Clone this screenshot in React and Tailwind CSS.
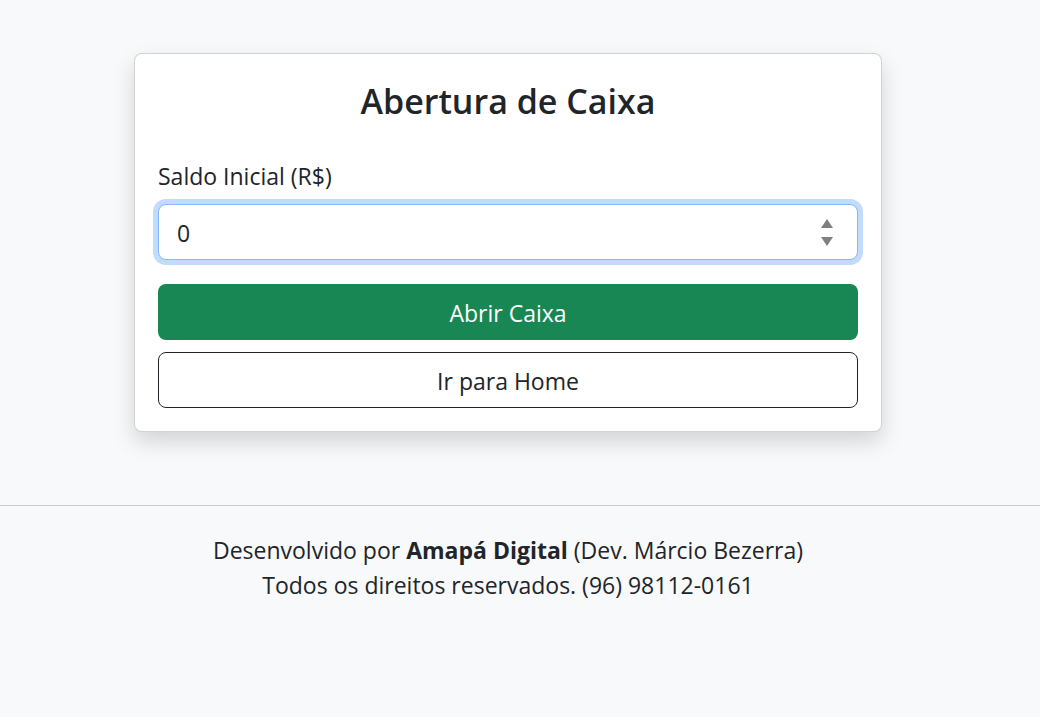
import React, { useState } from 'react';

const font = { fontFamily: '"Open Sans", "Noto Sans", sans-serif' };

export default function App() {
  const [saldo, setSaldo] = useState('0');

  return (
    <div className="min-h-[717px] bg-[#f8f9fa] text-[#212529]" style={font}>
      <div className="w-[1016px] pt-[53px] flex flex-col items-center">
        {/* Card */}
        <div className="w-[748px] bg-white border border-[rgba(0,0,0,0.175)] rounded-[8px] shadow-[0_10px_22px_rgba(0,0,0,0.15)] px-[23px] pt-[23px] pb-[23px]">
          <h2 className="text-center text-[34px] font-semibold leading-[48px] mb-[36px]">Abertura de Caixa</h2>

          <label className="block text-[23px] leading-[30px] mb-[13px]">Saldo Inicial (R$)</label>
          <div className="relative mb-[24px]">
            <input
              type="number"
              value={saldo}
              onChange={(e) => setSaldo(e.target.value)}
              className="w-full h-[56px] rounded-[8px] border border-[#86b7fe] bg-white pl-[18px] pr-[40px] pt-[2px] text-[23px] outline-none shadow-[0_0_0_5px_rgba(13,110,253,0.25)] [appearance:textfield] [&::-webkit-inner-spin-button]:appearance-none [&::-webkit-outer-spin-button]:appearance-none"
            />
            {/* spinner arrows */}
            <svg className="absolute right-[24px] top-[12px]" width="14" height="32" viewBox="0 0 14 32">
              <path d="M7 3 L13 12 L1 12 Z" fill="#808080" />
              <path d="M1 21 L13 21 L7 30 Z" fill="#808080" />
            </svg>
          </div>

          <button className="w-full h-[56px] rounded-[8px] bg-[#198754] text-white text-[23px] pt-[2px] mb-[12px]">Abrir Caixa</button>
          <button className="w-full h-[56px] rounded-[8px] border border-[#212529] bg-white text-[#212529] text-[23px] pt-[2px]">Ir para Home</button>
        </div>
      </div>

      <hr className="mt-[73px] border-0 border-t border-[#c9cacb]" />

      <footer className="w-[1016px] pt-[27px] text-center text-[23px] leading-[35px]">
        <p>
          Desenvolvido por <strong className="font-bold">Amapá Digital</strong> (Dev. Márcio Bezerra)
        </p>
        <p>Todos os direitos reservados. (96) 98112-0161</p>
      </footer>
    </div>
  );
}
